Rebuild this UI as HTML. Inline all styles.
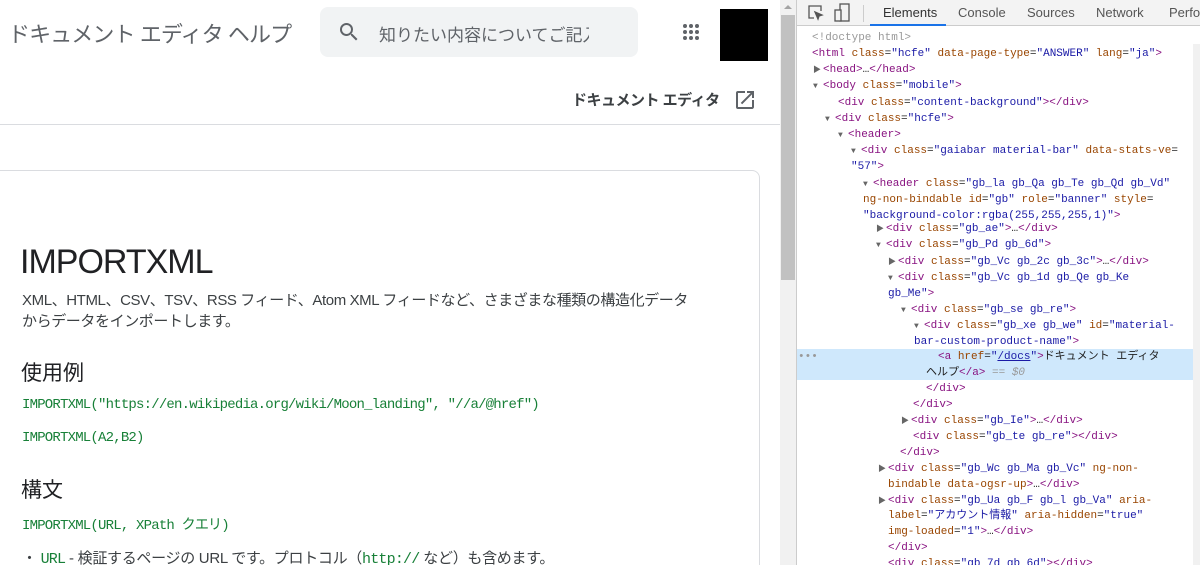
<!DOCTYPE html>
<html><head><meta charset="utf-8">
<style>
*{margin:0;padding:0;box-sizing:border-box}
html,body{width:1200px;height:565px;overflow:hidden}
body{background:#fff;font-family:"Liberation Sans","Noto Sans CJK JP",sans-serif;position:relative}
.a{position:absolute;white-space:nowrap}
.dt{position:absolute;left:796px;top:0;width:404px;height:565px;background:#fff;border-left:1px solid #ccc}
.l{position:absolute;white-space:nowrap;font:11px/16px "Liberation Mono","Noto Sans CJK JP",monospace;color:#222}
.t{color:#881280}.n{color:#994500}.v{color:#1a1aa6}.g{color:#999}
.ar{font-size:8px;color:#666;display:inline-block;width:10px;margin-left:-11px}
.code{font-family:"Liberation Mono",monospace;font-size:14px;letter-spacing:-0.8px;color:#188038}
</style></head><body>
<div class="a" style="left:8px;top:17px;font-size:22px;color:#5f6368;letter-spacing:-0.9px">ドキュメント エディタ ヘルプ</div>
<div class="a" style="left:320px;top:7px;width:318px;height:50px;background:#f1f3f4;border-radius:8px"></div>
<svg class="a" style="left:337px;top:20px" width="24" height="24" viewBox="0 0 24 24"><path fill="#5f6368" d="M15.5 14h-.79l-.28-.27A6.47 6.47 0 0016 9.5 6.5 6.5 0 109.5 16c1.61 0 3.09-.59 4.23-1.57l.27.28v.79l5 4.99L20.49 19l-4.99-5zm-6 0C7.01 14 5 11.99 5 9.5S7.01 5 9.5 5 14 7.01 14 9.5 11.99 14 9.5 14z"/></svg>
<div class="a" style="left:379px;top:21px;font-size:17px;color:#5f6368;width:210px;overflow:hidden">知りたい内容についてご記入</div>
<svg class="a" style="left:682px;top:23px" width="18" height="18" viewBox="0 0 18 18" fill="#5f6368"><circle cx="3" cy="3" r="2"/><circle cx="9" cy="3" r="2"/><circle cx="15" cy="3" r="2"/><circle cx="3" cy="9" r="2"/><circle cx="9" cy="9" r="2"/><circle cx="15" cy="9" r="2"/><circle cx="3" cy="15" r="2"/><circle cx="9" cy="15" r="2"/><circle cx="15" cy="15" r="2"/></svg>
<div class="a" style="left:720px;top:9px;width:48px;height:52px;background:#000"></div>
<div class="a" style="left:572px;top:89px;font-size:15px;font-weight:bold;color:#3c4043;letter-spacing:-0.5px">ドキュメント エディタ</div>
<svg class="a" style="left:733px;top:88px" width="24" height="24" viewBox="0 0 24 24"><path fill="#5f6368" d="M19 19H5V5h7V3H5a2 2 0 00-2 2v14a2 2 0 002 2h14c1.1 0 2-.9 2-2v-7h-2v7zM14 3v2h3.59l-9.83 9.83 1.41 1.41L19 6.41V10h2V3h-7z"/></svg>
<div class="a" style="left:0;top:124px;width:780px;height:1px;background:#dadce0"></div>
<div class="a" style="left:-10px;top:170px;width:770px;height:420px;border:1px solid #dadce0;border-radius:8px"></div>
<div class="a" style="left:20px;top:243px;font-size:34px;color:#202124;letter-spacing:-1px">IMPORTXML</div>
<div class="a" style="left:22px;top:290px;font-size:15px;line-height:21px;color:#3c4043;letter-spacing:-0.4px">XML、HTML、CSV、TSV、RSS フィード、Atom XML フィードなど、さまざまな種類の構造化データ<br>からデータをインポートします。</div>
<div class="a" style="left:21px;top:357px;font-size:21px;color:#202124">使用例</div>
<div class="a code" style="left:22px;top:397px">IMPORTXML("https://en.wikipedia.org/wiki/Moon_landing", "//a/@href")</div>
<div class="a code" style="left:22px;top:430px">IMPORTXML(A2,B2)</div>
<div class="a" style="left:21px;top:474px;font-size:21px;color:#202124">構文</div>
<div class="a code" style="left:22px;top:514px;font-family:'Liberation Mono','Noto Sans CJK JP',monospace">IMPORTXML(URL, XPath クエリ)</div>
<div class="a" style="left:22px;top:547px;font-size:15px;color:#3c4043;letter-spacing:-0.3px">・ <span class="code" style="font-size:15px">URL</span> - 検証するページの URL です。プロトコル（<span class="code" style="font-size:15px">http://</span> など）も含めます。</div>
<div class="a" style="left:780px;top:0;width:16px;height:565px;background:#f1f1f1"></div>
<div class="a" style="left:781px;top:15px;width:14px;height:265px;background:#c1c1c1"></div>
<div class="a" style="left:784px;top:5px;width:0;height:0;border-left:4px solid transparent;border-right:4px solid transparent;border-bottom:4px solid #a3a3a3"></div>
<div class="dt">
 <div class="a" style="left:0;top:0;width:404px;height:26px;background:#f3f3f3;border-bottom:1px solid #ccc"></div>
 <svg class="a" style="left:10px;top:4px" width="18" height="18" viewBox="0 0 18 18" fill="none" stroke="#555" stroke-width="1.3"><path d="M7 14H2V2h12v5"/><path d="M8 8l7 3-3 1-1 3z" fill="#555"/></svg>
 <svg class="a" style="left:36px;top:3px" width="18" height="20" viewBox="0 0 18 20" fill="none" stroke="#555" stroke-width="1.3"><rect x="7" y="1" width="9" height="17"/><rect x="2" y="7" width="6" height="11" fill="#f3f3f3"/></svg>
 <div class="a" style="left:66px;top:5px;width:1px;height:17px;background:#ccc"></div>
 <div class="a" style="left:86px;top:5px;font-size:13px;color:#333">Elements</div>
 <div class="a" style="left:73px;top:24px;width:76px;height:2px;background:#1a73e8"></div>
 <div class="a" style="left:161px;top:5px;font-size:13px;color:#555">Console</div>
 <div class="a" style="left:230px;top:5px;font-size:13px;color:#555">Sources</div>
 <div class="a" style="left:299px;top:5px;font-size:13px;color:#555">Network</div>
 <div class="a" style="left:372px;top:5px;font-size:13px;color:#555">Performance</div>
 <div class="a" style="left:0;top:349px;width:400px;height:31px;background:#cfe8fc"></div>
 <div class="a" style="left:396px;top:44px;width:8px;height:521px;background:#f1f1f1"></div>
</div>
<div class="l g" style="left:812px;top:30px">&lt;!doctype html&gt;</div>
<div class="l" style="left:812px;top:46px"><span class="t">&lt;html</span> <span class="n">class</span>=<span class="v">"hcfe"</span> <span class="n">data-page-type</span>=<span class="v">"ANSWER"</span> <span class="n">lang</span>=<span class="v">"ja"</span><span class="t">&gt;</span></div>
<div class="l" style="left:824px;top:62px"><span class="ar">▶</span><span class="t">&lt;head&gt;</span>…<span class="t">&lt;/head&gt;</span></div>
<div class="l" style="left:824px;top:78px"><span class="ar">▼</span><span class="t">&lt;body</span> <span class="n">class</span>=<span class="v">"mobile"</span><span class="t">&gt;</span></div>
<div class="l" style="left:838px;top:95px"><span class="t">&lt;div</span> <span class="n">class</span>=<span class="v">"content-background"</span><span class="t">&gt;&lt;/div&gt;</span></div>
<div class="l" style="left:836px;top:111px"><span class="ar">▼</span><span class="t">&lt;div</span> <span class="n">class</span>=<span class="v">"hcfe"</span><span class="t">&gt;</span></div>
<div class="l" style="left:849px;top:127px"><span class="ar">▼</span><span class="t">&lt;header&gt;</span></div>
<div class="l" style="left:862px;top:143px"><span class="ar">▼</span><span class="t">&lt;div</span> <span class="n">class</span>=<span class="v">"gaiabar material-bar"</span> <span class="n">data-stats-ve</span>=</div>
<div class="l" style="left:851px;top:159px"><span class="v">"57"</span><span class="t">&gt;</span></div>
<div class="l" style="left:874px;top:176px"><span class="ar">▼</span><span class="t">&lt;header</span> <span class="n">class</span>=<span class="v">"gb_la gb_Qa gb_Te gb_Qd gb_Vd"</span></div>
<div class="l" style="left:863px;top:192px"><span class="n">ng-non-bindable</span> <span class="n">id</span>=<span class="v">"gb"</span> <span class="n">role</span>=<span class="v">"banner"</span> <span class="n">style</span>=</div>
<div class="l" style="left:863px;top:208px"><span class="v">"background-color:rgba(255,255,255,1)"</span><span class="t">&gt;</span></div>
<div class="l" style="left:887px;top:221px"><span class="ar">▶</span><span class="t">&lt;div</span> <span class="n">class</span>=<span class="v">"gb_ae"</span><span class="t">&gt;</span>…<span class="t">&lt;/div&gt;</span></div>
<div class="l" style="left:887px;top:237px"><span class="ar">▼</span><span class="t">&lt;div</span> <span class="n">class</span>=<span class="v">"gb_Pd gb_6d"</span><span class="t">&gt;</span></div>
<div class="l" style="left:899px;top:254px"><span class="ar">▶</span><span class="t">&lt;div</span> <span class="n">class</span>=<span class="v">"gb_Vc gb_2c gb_3c"</span><span class="t">&gt;</span>…<span class="t">&lt;/div&gt;</span></div>
<div class="l" style="left:899px;top:270px"><span class="ar">▼</span><span class="t">&lt;div</span> <span class="n">class</span>=<span class="v">"gb_Vc gb_1d gb_Qe gb_Ke</span></div>
<div class="l" style="left:888px;top:286px"><span class="v">gb_Me"</span><span class="t">&gt;</span></div>
<div class="l" style="left:912px;top:302px"><span class="ar">▼</span><span class="t">&lt;div</span> <span class="n">class</span>=<span class="v">"gb_se gb_re"</span><span class="t">&gt;</span></div>
<div class="l" style="left:925px;top:318px"><span class="ar">▼</span><span class="t">&lt;div</span> <span class="n">class</span>=<span class="v">"gb_xe gb_we"</span> <span class="n">id</span>=<span class="v">"material-</span></div>
<div class="l" style="left:914px;top:334px"><span class="v">bar-custom-product-name"</span><span class="t">&gt;</span></div>
<div class="l g" style="left:798px;top:349px">•••</div>
<div class="l" style="left:938px;top:349px"><span class="t">&lt;a</span> <span class="n">href</span>=<span class="v">"<u>/docs</u>"</span><span class="t">&gt;</span>ドキュメント エディタ</div>
<div class="l" style="left:926px;top:365px">ヘルプ<span class="t">&lt;/a&gt;</span> <span class="g">== <i>$0</i></span></div>
<div class="l" style="left:926px;top:381px"><span class="t">&lt;/div&gt;</span></div>
<div class="l" style="left:913px;top:397px"><span class="t">&lt;/div&gt;</span></div>
<div class="l" style="left:912px;top:413px"><span class="ar">▶</span><span class="t">&lt;div</span> <span class="n">class</span>=<span class="v">"gb_Ie"</span><span class="t">&gt;</span>…<span class="t">&lt;/div&gt;</span></div>
<div class="l" style="left:913px;top:429px"><span class="t">&lt;div</span> <span class="n">class</span>=<span class="v">"gb_te gb_re"</span><span class="t">&gt;&lt;/div&gt;</span></div>
<div class="l" style="left:900px;top:445px"><span class="t">&lt;/div&gt;</span></div>
<div class="l" style="left:889px;top:461px"><span class="ar">▶</span><span class="t">&lt;div</span> <span class="n">class</span>=<span class="v">"gb_Wc gb_Ma gb_Vc"</span> <span class="n">ng-non-</span></div>
<div class="l" style="left:888px;top:477px"><span class="n">bindable data-ogsr-up</span><span class="t">&gt;</span>…<span class="t">&lt;/div&gt;</span></div>
<div class="l" style="left:889px;top:493px"><span class="ar">▶</span><span class="t">&lt;div</span> <span class="n">class</span>=<span class="v">"gb_Ua gb_F gb_l gb_Va"</span> <span class="n">aria-</span></div>
<div class="l" style="left:888px;top:508px"><span class="n">label</span>=<span class="v">"アカウント情報"</span> <span class="n">aria-hidden</span>=<span class="v">"true"</span></div>
<div class="l" style="left:888px;top:524px"><span class="n">img-loaded</span>=<span class="v">"1"</span><span class="t">&gt;</span>…<span class="t">&lt;/div&gt;</span></div>
<div class="l" style="left:888px;top:540px"><span class="t">&lt;/div&gt;</span></div>
<div class="l" style="left:888px;top:556px"><span class="t">&lt;div</span> <span class="n">class</span>=<span class="v">"gb_7d gb_6d"</span><span class="t">&gt;&lt;/div&gt;</span></div>
</body></html>
